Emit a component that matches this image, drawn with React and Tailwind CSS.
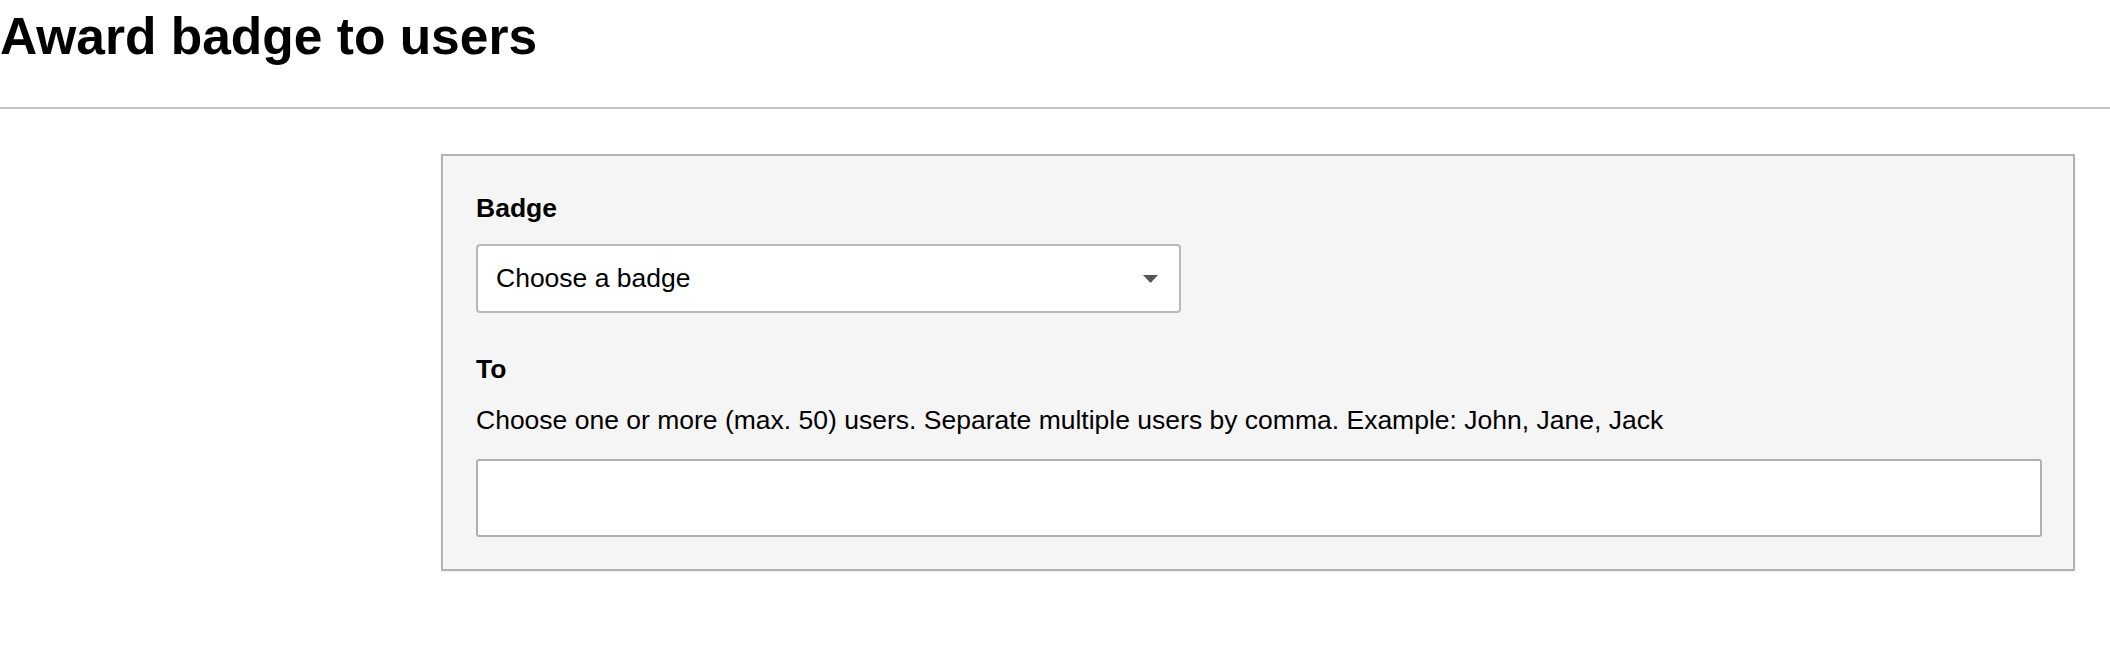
import React from "react";

const font = { fontFamily: '"Liberation Sans", Arial, sans-serif' };

const App = () => {
    return (
        <div className="min-h-[664px] bg-white text-black" style={font}>
            {/* titel */}
            <h1 className="pt-[6px] pb-[40px] text-[51.5px] leading-[61px] font-bold border-b-2 border-[#c4c4c4]">
                Award badge to users
            </h1>

            <div className="flex pt-[45px] pl-[441px] pr-[35px]">
                <form className="flex-1 bg-[#f5f5f5] border-2 border-[#b3b3b3] shadow-[0_1px_2px_rgba(0,0,0,0.08)] pt-[37px] pb-[32px] pl-[33px] pr-[31px]">
                    <label className="block text-[26.5px] leading-[31px] font-bold">
                        Badge
                    </label>

                    <div className="mt-[20px] w-[705px] h-[69px] bg-white border-2 border-[#b8b8b8] rounded-[4px] flex items-center justify-between pl-[18px] pr-[21px]">
                        <span className="text-[26.5px] leading-[31px]">
                            Choose a badge
                        </span>
                        <svg width="15" height="8" viewBox="0 0 15 8">
                            <path d="M0 0 L15 0 L7.5 8 Z" fill="#555555" />
                        </svg>
                    </div>

                    <label className="block mt-[41px] text-[26.5px] leading-[31px] font-bold">
                        To
                    </label>
                    <p className="mt-[20px] text-[26.5px] leading-[31px]">
                        Choose one or more (max. 50) users. Separate multiple
                        users by comma. Example: John, Jane, Jack
                    </p>

                    <input
                        type="text"
                        className="block mt-[23px] w-full h-[78px] bg-white border-2 border-[#b0b0b0] rounded-[3px] outline-none px-3 text-[26.5px]"
                    />
                </form>
            </div>
        </div>
    );
};

export default App;
